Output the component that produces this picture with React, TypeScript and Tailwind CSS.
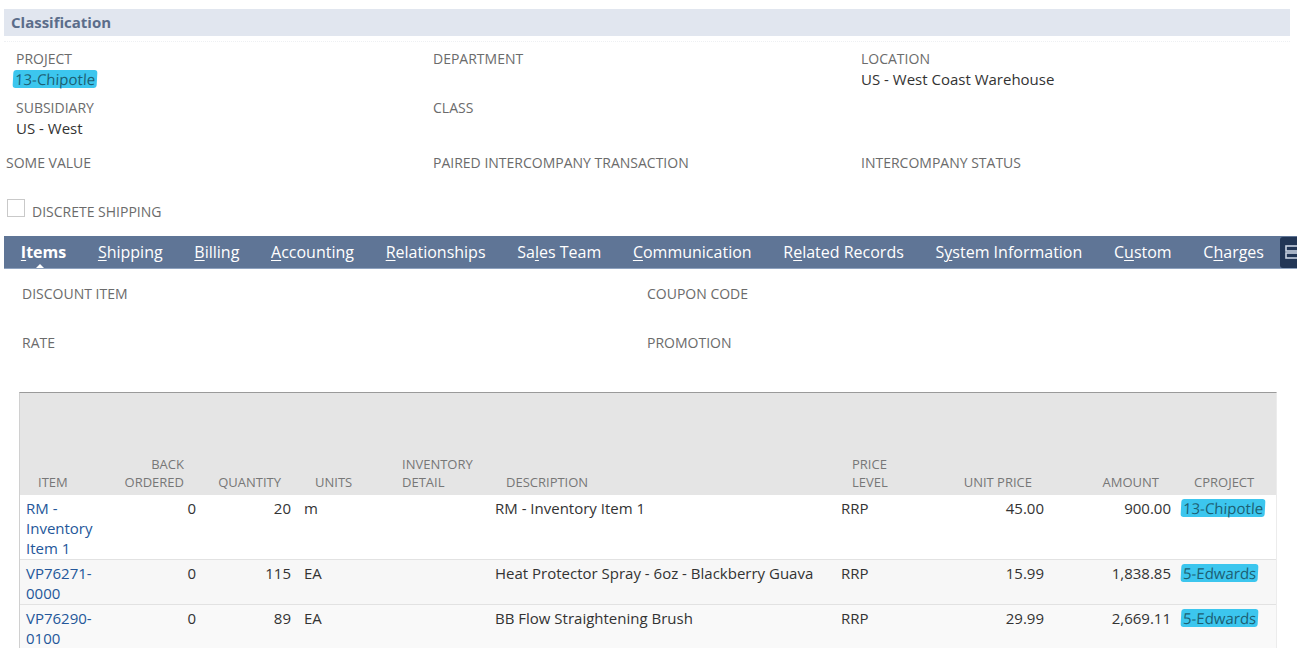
import React from "react";

function Hl({ children, className = "" }: { children: React.ReactNode; className?: string }) {
  return (
    <span className={`inline-block bg-[#3cc6ee] text-[#1d5f73] rounded-[3px] -skew-x-3 px-[2px] leading-[18px] ${className}`}>
      {children}
    </span>
  );
}

function Field({ label, value }: { label: string; value?: React.ReactNode }) {
  return (
    <div className="h-[49px]">
      <div className="text-[14px] leading-[20px] text-[#6b6b6b] uppercase">{label}</div>
      {value ? <div className="text-[15px] leading-[21px] text-[#333]">{value}</div> : null}
    </div>
  );
}

function Tab({ pre, u, post, active }: { pre: string; u: string; post: string; active?: boolean }) {
  return (
    <div className={`relative shrink-0 whitespace-nowrap px-[15.85px] h-full flex items-center text-[16px] text-white ${active ? "font-bold" : ""}`}>
      <span>
        {pre}
        <span className="underline underline-offset-2 decoration-1">{u}</span>
        {post}
      </span>
      {active ? (
        <span className="absolute left-[30px] bottom-[-1px] w-0 h-0 border-l-[5px] border-r-[5px] border-b-[5px] border-l-transparent border-r-transparent border-b-white" />
      ) : null}
    </div>
  );
}

const cols = "grid grid-cols-[88px_94px_95px_87px_105px_346px_85px_130px_127px_100px]";

type Row = {
  item: string[];
  bo: string;
  qty: string;
  units: string;
  desc: string;
  pl: string;
  up: string;
  amt: string;
  proj: string;
  bg: string;
};

const rows: Row[] = [
  { item: ["RM -", "Inventory", "Item 1"], bo: "0", qty: "20", units: "m", desc: "RM - Inventory Item 1", pl: "RRP", up: "45.00", amt: "900.00", proj: "13-Chipotle", bg: "bg-white" },
  { item: ["VP76271-", "0000"], bo: "0", qty: "115", units: "EA", desc: "Heat Protector Spray - 6oz - Blackberry Guava", pl: "RRP", up: "15.99", amt: "1,838.85", proj: "5-Edwards", bg: "bg-[#f7f7f7]" },
  { item: ["VP76290-", "0100"], bo: "0", qty: "89", units: "EA", desc: "BB Flow Straightening Brush", pl: "RRP", up: "29.99", amt: "2,669.11", proj: "5-Edwards", bg: "bg-[#f9f9f9]" },
];

export default function App() {
  return (
    <div className="w-[1297px] h-[648px] overflow-hidden bg-white font-['Open_Sans',sans-serif] text-[#333]">
      {/* Classification header */}
      <div className="mt-[9px] ml-[4px] w-[1286px] h-[27px] bg-[#e1e6ef] px-[7px] flex items-center">
        <span className="text-[15px] font-bold text-[#5b6d8a]">Classification</span>
      </div>
      <div className="ml-[4px] w-[1286px] border-b border-dotted border-[#eef0f3] h-[6px]" />

      {/* Fields */}
      <div className="mt-[7px] pl-[16px] grid grid-cols-[417px_428px_1fr]">
        <div>
          <Field label="Project" value={<Hl className="-ml-[3px]">13-Chipotle</Hl>} />
          <Field label="Subsidiary" value="US - West" />
        </div>
        <div>
          <Field label="Department" />
          <Field label="Class" />
        </div>
        <div>
          <Field label="Location" value="US - West Coast Warehouse" />
        </div>
      </div>
      <div className="mt-[6px] pl-[6px] grid grid-cols-[427px_428px_1fr] text-[14px] leading-[20px] text-[#6b6b6b] uppercase">
        <div>Some Value</div>
        <div>Paired Intercompany Transaction</div>
        <div>Intercompany Status</div>
      </div>
      <div className="mt-[26px] pl-[7px] flex items-end gap-[7px]">
        <div className="w-[18px] h-[18px] border border-[#c9c9c9] bg-white" />
        <div className="text-[14px] leading-[16px] text-[#6b6b6b] uppercase translate-y-[3px]">Discrete Shipping</div>
      </div>

      {/* Tabs */}
      <div className="mt-[19px] ml-[4px] h-[33px] bg-[#5f7596] border-b border-[#8ea2bf] flex items-center pl-[1px] overflow-hidden">
        <Tab pre="" u="I" post="tems" active />
        <Tab pre="" u="S" post="hipping" />
        <Tab pre="" u="B" post="illing" />
        <Tab pre="" u="A" post="ccounting" />
        <Tab pre="" u="R" post="elationships" />
        <Tab pre="Sa" u="l" post="es Team" />
        <Tab pre="" u="C" post="ommunication" />
        <Tab pre="R" u="e" post="lated Records" />
        <Tab pre="S" u="y" post="stem Information" />
        <Tab pre="C" u="u" post="stom" />
        <Tab pre="C" u="h" post="arges" />
        <div className="h-[31px] w-[30px] shrink-0 bg-[#223656] rounded-[3px] flex items-center pl-[5px]">
          <svg width="14" height="16" viewBox="0 0 14 16" fill="none" stroke="#c9d3e2" strokeWidth="1.6">
            <rect x="1" y="2" width="14" height="5" />
            <rect x="1" y="9" width="14" height="5" />
          </svg>
        </div>
      </div>

      {/* Discount fields */}
      <div className="mt-[15px] pl-[22px] grid grid-cols-[625px_1fr] text-[14px] leading-[20px] text-[#6b6b6b] uppercase">
        <div className="h-[49px]">Discount Item</div>
        <div className="h-[49px]">Coupon Code</div>
        <div>Rate</div>
        <div>Promotion</div>
      </div>

      {/* Table */}
      <div className="mt-[39px] ml-[19px] w-[1258px] border-t border-[#9a9a9a] border-l border-l-[#d0d0d0] border-r border-r-[#ececec]">
        <div className={`${cols} h-[102px] bg-[#e5e5e5] items-end pb-[4px] text-[13px] leading-[18px] text-[#777] uppercase`}>
          <div className="pl-[18px]">Item</div>
          <div className="pr-[18px] text-right">Back<br />Ordered</div>
          <div className="pr-[16px] text-right">Quantity</div>
          <div className="pl-[18px]">Units</div>
          <div className="pl-[18px]">Inventory<br />Detail</div>
          <div className="pl-[17px]">Description</div>
          <div className="pl-[17px]">Price<br />Level</div>
          <div className="pr-[18px] text-right">Unit Price</div>
          <div className="pr-[18px] text-right">Amount</div>
          <div className="pl-[17px]">CProject</div>
        </div>
        {rows.map((r, i) => (
          <div key={i} className={`${cols} ${r.bg} border-b border-[#e2e2e2] pt-[3px] pb-[1px] text-[15px] leading-[20px] text-[#333]`}>
            <div className="pl-[6px] text-[#24579a]">
              {r.item.map((t, j) => (
                <div key={j}>{t}</div>
              ))}
            </div>
            <div className="pr-[6px] text-right">{r.bo}</div>
            <div className="pr-[6px] text-right">{r.qty}</div>
            <div className="pl-[7px]">{r.units}</div>
            <div />
            <div className="pl-[6px]">{r.desc}</div>
            <div className="pl-[6px]">{r.pl}</div>
            <div className="pr-[6px] text-right">{r.up}</div>
            <div className="pr-[6px] text-right">{r.amt}</div>
            <div className="pl-[4px]">
              <Hl>{r.proj}</Hl>
            </div>
          </div>
        ))}
      </div>
    </div>
  );
}
